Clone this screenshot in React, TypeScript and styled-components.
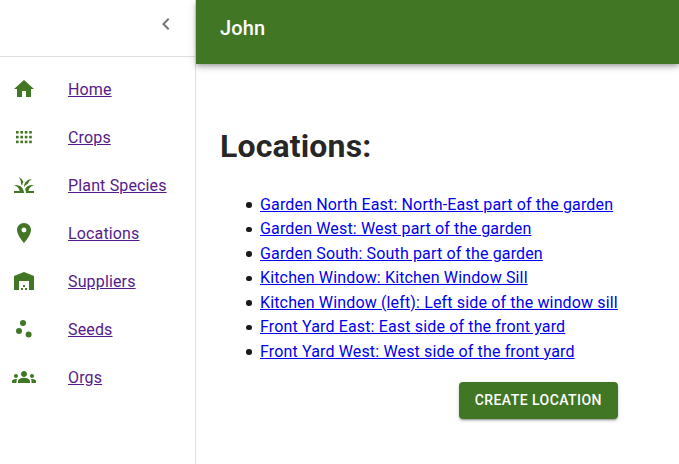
import React from "react";
import styled, { createGlobalStyle } from "styled-components";
import { MdChevronLeft, MdHome, MdGrass, MdLocationOn, MdWarehouse, MdScatterPlot, MdGroups } from "react-icons/md";

const GlobalStyle = createGlobalStyle`
    html, body {
        margin: 0;
        padding: 0;
        height: 100%;
        overflow: hidden;
        background: #fff;
        font-family: Roboto, "Liberation Sans", sans-serif;
        letter-spacing: 0.15px;
    }
`;

const Page = styled.div`
    display: flex;
    height: 464px;
    color: rgba(0, 0, 0, 0.87);
`;

const Drawer = styled.aside`
    width: 195px;
    flex-shrink: 0;
    border-right: 1px solid #e0e0e0;
`;

const DrawerHeader = styled.div`
    height: 56px;
    display: flex;
    align-items: center;
    justify-content: flex-end;
    padding-right: 17px;
    border-bottom: 1px solid #e0e0e0;
    color: #757575;
    font-size: 24px;
    svg {
        margin-top: -9px;
    }
`;

const NavList = styled.nav`
    display: flex;
    flex-direction: column;
    padding-top: 8px;
`;

const NavRow = styled.div`
    height: 48px;
    display: flex;
    align-items: center;
    padding-left: 12px;
`;

const NavIcon = styled.span`
    width: 56px;
    display: flex;
    color: #417624;
    font-size: 24px;
`;

const NavLink = styled.a`
    color: #551a8b;
    font-size: 16px;
    text-decoration: underline;
`;

const Main = styled.div`
    flex: 1;
    display: flex;
    flex-direction: column;
`;

const AppBar = styled.header`
    height: 56px;
    padding: 0 0 8px 24px;
    display: flex;
    align-items: center;
    background: #417624;
    color: #fff;
    font-size: 20px;
    font-weight: 500;
    box-shadow: 0 2px 4px -1px rgba(0, 0, 0, 0.2), 0 4px 5px 0 rgba(0, 0, 0, 0.14), 0 1px 10px 0 rgba(0, 0, 0, 0.12);
`;

const Content = styled.main`
    padding: 64px 61px 0 24px;
`;

const Title = styled.h1`
    margin: 0 0 27.9px;
    font-size: 32px;
    line-height: 37px;
    font-weight: 700;
`;

const LocationList = styled.ul`
    margin: 0;
    padding: 0 0 0 26px;
    list-style: none;
    font-size: 16px;
    line-height: 24.5px;
`;

const LocationItem = styled.li`
    display: flex;
    align-items: center;
    gap: 8.5px;

    &::before {
        content: "";
        width: 5.5px;
        height: 5.5px;
        border-radius: 50%;
        background: #1a1a1a;
    }
`;

const LocationLink = styled.a`
    color: #0000ee;
    text-decoration: underline;
`;

const Actions = styled.div`
    display: flex;
    justify-content: flex-end;
    margin-top: 17.6px;
`;

const CreateButton = styled.button`
    height: 37px;
    padding: 0 16px;
    border: none;
    border-radius: 4px;
    background: #417624;
    color: #fff;
    font-family: inherit;
    font-size: 14px;
    font-weight: 500;
    letter-spacing: 0.45px;
    text-transform: uppercase;
    box-shadow: 0 3px 1px -2px rgba(0, 0, 0, 0.2), 0 2px 2px 0 rgba(0, 0, 0, 0.14), 0 1px 5px 0 rgba(0, 0, 0, 0.12);
`;

function CropsIcon() {
    const dots = [];
    for (let row = 0; row < 3; row++) {
        for (let col = 0; col < 4; col++) {
            dots.push(<rect key={`${row}-${col}`} x={4 + col * 4.4} y={6 + row * 4.8} width="2.6" height="2.6" />);
        }
    }
    return (
        <svg width="1em" height="1em" viewBox="0 0 24 24" fill="currentColor">
            {dots}
        </svg>
    );
}

const navItems = [
    { label: "Home", icon: <MdHome /> },
    { label: "Crops", icon: <CropsIcon /> },
    { label: "Plant Species", icon: <MdGrass /> },
    { label: "Locations", icon: <MdLocationOn /> },
    { label: "Suppliers", icon: <MdWarehouse /> },
    { label: "Seeds", icon: <MdScatterPlot /> },
    { label: "Orgs", icon: <MdGroups /> },
];

const locations = [
    "Garden North East: North-East part of the garden",
    "Garden West: West part of the garden",
    "Garden South: South part of the garden",
    "Kitchen Window: Kitchen Window Sill",
    "Kitchen Window (left): Left side of the window sill",
    "Front Yard East: East side of the front yard",
    "Front Yard West: West side of the front yard",
];

export default function App() {
    return (
        <Page>
            <GlobalStyle />
            <Drawer>
                <DrawerHeader>
                    <MdChevronLeft />
                </DrawerHeader>
                <NavList>
                    {navItems.map((item) => (
                        <NavRow key={item.label}>
                            <NavIcon>{item.icon}</NavIcon>
                            <NavLink href="#">{item.label}</NavLink>
                        </NavRow>
                    ))}
                </NavList>
            </Drawer>
            <Main>
                <AppBar>John</AppBar>
                <Content>
                    <Title>Locations:</Title>
                    <LocationList>
                        {locations.map((location) => (
                            <LocationItem key={location}>
                                <LocationLink href="#">{location}</LocationLink>
                            </LocationItem>
                        ))}
                    </LocationList>
                    <Actions>
                        <CreateButton>Create Location</CreateButton>
                    </Actions>
                </Content>
            </Main>
        </Page>
    );
}
